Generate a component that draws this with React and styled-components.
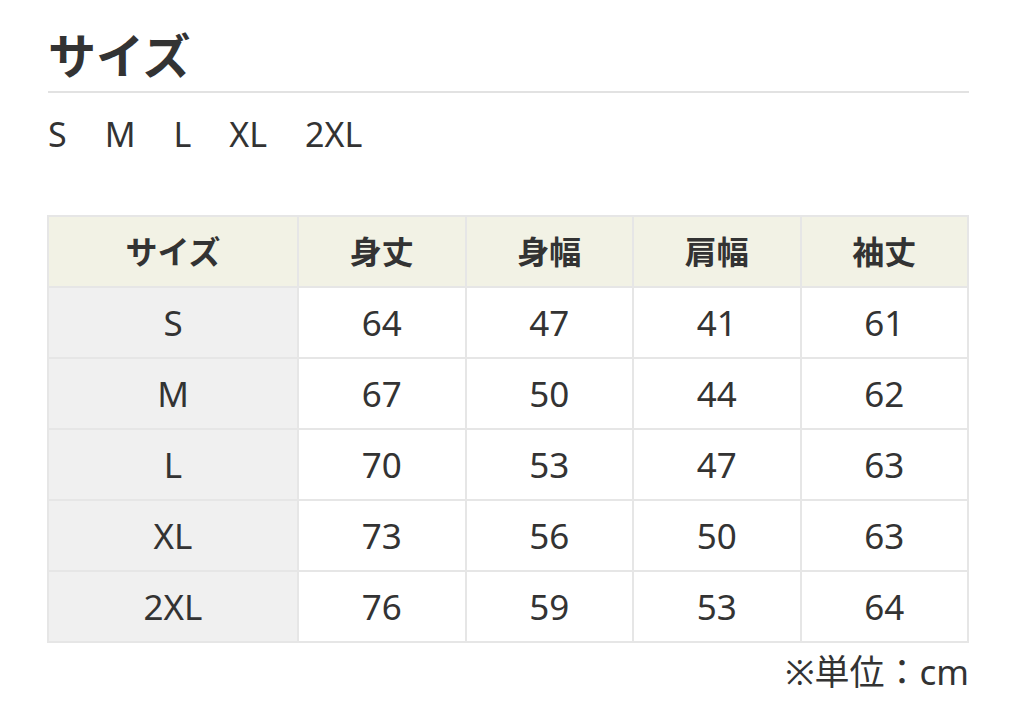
import React from 'react'
import styled, { createGlobalStyle } from 'styled-components';

const Global = createGlobalStyle`
    body {
      margin: 0;
      background: #ffffff;
      font-family: "Noto Sans", "Noto Sans CJK JP", sans-serif;
      color: #333333;
    }
`
const Page = styled.div`
    width: 921px;
    padding: 21px 0 0 48px;
`
const Heading = styled.h2`
    margin: 0;
    font-family: "Noto Sans CJK JP", sans-serif;
    font-size: 48px;
    font-weight: 700;
    line-height: 64px;
    color: #333333;
    padding-bottom: 6px;
    border-bottom: 2px solid #e2e2e2;
`
const SizeList = styled.div`
    display: flex;
    gap: 38px;
    font-size: 34px;
    line-height: 44px;
    margin-top: 19px;
    color: #333333;
`
const Table = styled.table`
    margin-top: 59px;
    margin-left: -1px;
    width: 922px;
    border-collapse: collapse;
    table-layout: fixed;
`
const Head = styled.th`
    height: 65px;
    line-height: 40px;
    background: #f2f2e5;
    border: 2px solid #e6e6e6;
    font-family: "Noto Sans CJK JP", sans-serif;
    font-size: 32px;
    font-weight: 700;
    color: #333333;
    padding: 0 0 4px;
    width: ${p => p.$first ? '248px' : 'auto'};
`
const Cell = styled.td`
    height: 69px;
    line-height: 40px;
    background: ${p => p.$first ? '#f0f0f0' : '#ffffff'};
    border: 2px solid #e6e6e6;
    text-align: center;
    font-size: 35px;
    color: #333333;
    padding: 0;
`
const Note = styled.div`
    text-align: right;
    font-size: 35px;
    line-height: 44px;
    margin-top: 7px;
    color: #333333;
`

const headers = ['サイズ', '身丈', '身幅', '肩幅', '袖丈']
const rows = [
    ['S', 64, 47, 41, 61],
    ['M', 67, 50, 44, 62],
    ['L', 70, 53, 47, 63],
    ['XL', 73, 56, 50, 63],
    ['2XL', 76, 59, 53, 64],
]

function App() {
  return (
    <Page>
        <Global />
        <Heading>サイズ</Heading>
        <SizeList>
            {rows.map(r => <span key={r[0]}>{r[0]}</span>)}
        </SizeList>
        <Table>
            <thead>
                <tr>
                    {headers.map((h, i) => <Head key={h} $first={i === 0}>{h}</Head>)}
                </tr>
            </thead>
            <tbody>
                {rows.map(r => (
                    <tr key={r[0]}>
                        {r.map((v, i) => <Cell key={i} $first={i === 0}>{v}</Cell>)}
                    </tr>
                ))}
            </tbody>
        </Table>
        <Note>※単位：cm</Note>
    </Page>
  )
}

export default App
